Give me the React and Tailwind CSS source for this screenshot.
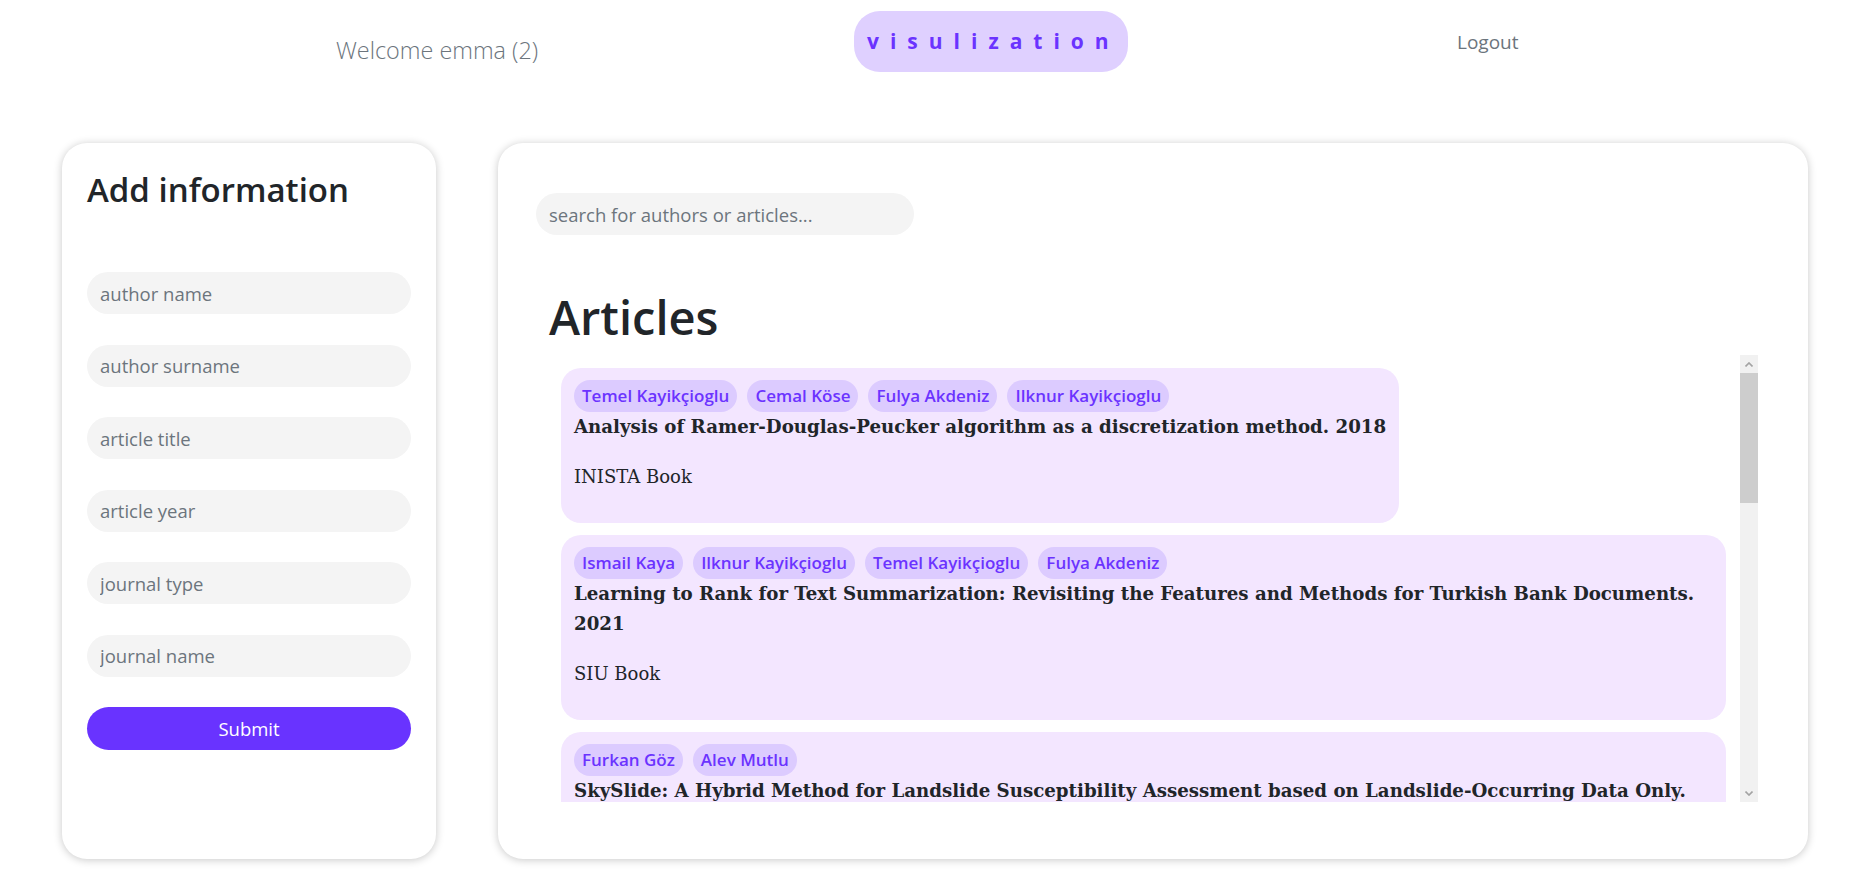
import { useState } from 'react'

const sans = { fontFamily: '"Open Sans", "Noto Sans", sans-serif' }
const serif = { fontFamily: '"DejaVu Serif", "Liberation Serif", serif' }

const articles = [
  {
    authors: ['Temel Kayikçioglu', 'Cemal Köse', 'Fulya Akdeniz', 'Ilknur Kayikçioglu'],
    title: 'Analysis of Ramer-Douglas-Peucker algorithm as a discretization method.',
    year: 2018,
    journal: 'INISTA Book'
  },
  {
    authors: ['Ismail Kaya', 'Ilknur Kayikçioglu', 'Temel Kayikçioglu', 'Fulya Akdeniz'],
    title: 'Learning to Rank for Text Summarization: Revisiting the Features and Methods for Turkish Bank Documents.',
    year: 2021,
    journal: 'SIU Book'
  },
  {
    authors: ['Furkan Göz', 'Alev Mutlu'],
    title: 'SkySlide: A Hybrid Method for Landslide Susceptibility Assessment based on Landslide-Occurring Data Only.',
    year: 2021,
    journal: 'Journal Article'
  },
  {
    authors: ['Alev Mutlu', 'Furkan Göz'],
    title: 'Landslide susceptibility mapping with machine learning methods.',
    year: 2020,
    journal: 'UBMK Book'
  },
  {
    authors: ['Fulya Akdeniz', 'Temel Kayikçioglu'],
    title: 'Detection of ECG arrhythmia using large Choi Williams time-frequency feature set.',
    year: 2019,
    journal: 'TIPTEKNO Book'
  },
  {
    authors: ['Cemal Köse', 'Ismail Kaya'],
    title: 'A comparative study of feature selection methods for text classification.',
    year: 2020,
    journal: 'ASYU Book'
  },
  {
    authors: ['Ilknur Kayikçioglu', 'Cemal Köse'],
    title: 'Time-frequency approach to ECG classification of myocardial infarction.',
    year: 2020,
    journal: 'Computers & Electrical Engineering'
  }
]

const fields = ['author name', 'author surname', 'article title', 'article year', 'journal type', 'journal name']

function Chevron({ down }) {
  return (
    <svg width="8" height="5" viewBox="0 0 8 5" className={down ? 'rotate-180' : ''}>
      <path d="M0.5 4.5 L4 1 L7.5 4.5" fill="none" stroke="#a3a3a3" strokeWidth="1.6" />
    </svg>
  )
}

export default function App() {
  const [search, setSearch] = useState('')
  const [form, setForm] = useState({})

  const filtered = articles.filter(a => {
    const q = search.toLowerCase()
    return a.title.toLowerCase().includes(q) || a.authors.some(n => n.toLowerCase().includes(q))
  })

  return (
    <div className="min-h-screen bg-white text-[#212529]" style={sans}>

      {/* Header */}
      <header className="flex items-start h-[143px]">
        <div className="w-[854px] pl-[336px] pt-[34px]">
          <span className="text-[23.4px] leading-[32px] font-light text-[#6c757d]">Welcome emma (2)</span>
        </div>
        <div className="w-[603px] pt-[11px]">
          <div className="inline-flex items-center h-[61px] pl-[13px] pr-[8px] rounded-[26px] bg-[#dfd0ff] text-[#6b33ff] text-[21px] font-bold tracking-[11px]">
            visulization
          </div>
        </div>
        <div className="pt-[29px]">
          <button className="text-[19px] leading-[26px] text-[#6c757d]">Logout</button>
        </div>
      </header>

      <div className="flex gap-[62px] px-[62px]">

        {/* Add information */}
        <div className="w-[374px] h-[716px] shrink-0 rounded-[25px] bg-white shadow-[0_1px_8px_rgba(0,0,0,0.22)] px-[25px] pt-[27px]">
          <h2 className="text-[33px] leading-[40px] font-semibold mb-[62px]">Add information</h2>
          <div className="flex flex-col gap-[30.5px]">
            {fields.map(f => (
              <input
                key={f}
                type="text"
                placeholder={f}
                value={form[f] || ''}
                onChange={e => setForm({ ...form, [f]: e.target.value })}
                className="h-[42px] w-full rounded-full bg-[#f4f4f4] px-[13px] text-[18.5px] outline-none placeholder:text-[#6c757d]"
              />
            ))}
            <button className="h-[43px] w-full rounded-full bg-[#6933ff] text-white text-[18.5px]">Submit</button>
          </div>
        </div>

        {/* Articles */}
        <div className="flex-1 h-[716px] rounded-[25px] bg-white shadow-[0_1px_8px_rgba(0,0,0,0.22)] pl-[38px] pr-[50px] pt-[50px]">
          <input
            type="text"
            placeholder="search for authors or articles..."
            value={search}
            onChange={e => setSearch(e.target.value)}
            className="h-[42px] w-[378px] rounded-full bg-[#f4f4f4] px-[13px] text-[18.5px] outline-none placeholder:text-[#6c757d]"
          />
          <div className="pl-[13px] mt-[52px]">
            <h1 className="text-[47px] leading-[60px] font-semibold mb-[8px]">Articles</h1>
            <div className="flex h-[447px]">
              <div className="flex-1 overflow-hidden pl-3 pr-[14px] pt-[13px] pb-3 flex flex-col gap-3">
                {filtered.map((a, i) => (
                  <div key={i} className="w-fit max-w-full shrink-0 rounded-[20px] bg-[#f3e6ff] px-[13px] pt-3 pb-[31px]">
                    <div className="flex flex-wrap gap-[10px]">
                      {a.authors.map(name => (
                        <span key={name} className="h-[32px] px-2 rounded-[16px] bg-[#dccbff] text-[#6b33ff] text-[17px] leading-[32px] font-semibold">
                          {name}
                        </span>
                      ))}
                    </div>
                    <div style={serif}>
                      <p className="text-[18.2px] leading-[30px] font-bold mb-5">{a.title} {a.year}</p>
                      <p className="text-[18px] leading-[30px]">{a.journal}</p>
                    </div>
                  </div>
                ))}
              </div>

              {/* scrollbar */}
              <div className="w-[18px] shrink-0 bg-[#f1f1f1] flex flex-col">
                <div className="h-[18px] flex items-center justify-center"><Chevron /></div>
                <div className="h-[130px] bg-[#cdcdcd]" />
                <div className="flex-1" />
                <div className="h-[18px] flex items-center justify-center"><Chevron down /></div>
              </div>
            </div>
          </div>
        </div>
      </div>
    </div>
  )
}
